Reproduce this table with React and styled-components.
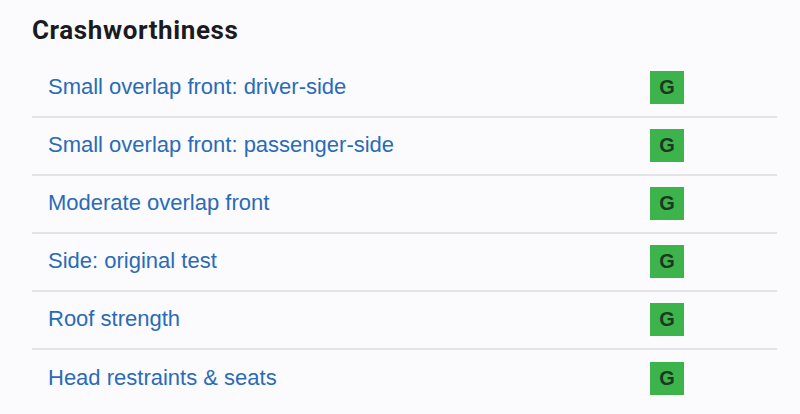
import React from 'react'
import styled, { createGlobalStyle } from 'styled-components'

const GlobalStyle = createGlobalStyle`
 html, body {
  margin: 0;
  padding: 0;
  background: #fbfbfd;
 }
`

const Wrapper = styled.section`
 width: 800px;
 height: 414px;
 box-sizing: border-box;
 padding: 16px 23px 0 32px;
 background: #fbfbfd;
`

const Title = styled.h2`
 margin: 0;
 height: 44px;
 font-family: Roboto, 'Liberation Sans', sans-serif;
 font-weight: 700;
 font-size: 26px;
 letter-spacing: 0.6px;
 line-height: 28px;
 color: #1b1b1f;
`

const List = styled.ul`
 list-style: none;
 margin: 0;
 padding: 0;
`

const Row = styled.li`
 display: flex;
 align-items: center;
 justify-content: space-between;
 height: 58px;
 box-sizing: border-box;
 padding: 0 93px 0 16px;
 border-bottom: ${p => (p.$last ? 'none' : '2px solid #e3e3e6')};
`

const Label = styled.a`
 font-family: 'Liberation Sans', Arial, sans-serif;
 font-size: 22px;
 line-height: 26px;
 margin-top: -2px;
 color: #2a6bb7;
 text-decoration: none;
 cursor: pointer;
`

const Badge = styled.span`
 display: flex;
 align-items: center;
 justify-content: center;
 width: 34px;
 height: 33px;
 margin-top: -1px;
 background: ${p => p.$color};
 color: #1d3822;
 font-family: 'Liberation Sans', Arial, sans-serif;
 font-size: 20px;
 font-weight: 700;
`

const ratingColors = { G: '#3db44b' }

const tests = [
 { name: 'Small overlap front: driver-side', rating: 'G' },
 { name: 'Small overlap front: passenger-side', rating: 'G' },
 { name: 'Moderate overlap front', rating: 'G' },
 { name: 'Side: original test', rating: 'G' },
 { name: 'Roof strength', rating: 'G' },
 { name: 'Head restraints & seats', rating: 'G' },
]

const App = () => {
 return (
  <Wrapper>
   <GlobalStyle />
   <Title>Crashworthiness</Title>
   <List>
    {tests.map((t, i) => (
     <Row key={t.name} $last={i === tests.length - 1}>
      <Label>{t.name}</Label>
      <Badge $color={ratingColors[t.rating]}>{t.rating}</Badge>
     </Row>
    ))}
   </List>
  </Wrapper>
 )
}

export default App
